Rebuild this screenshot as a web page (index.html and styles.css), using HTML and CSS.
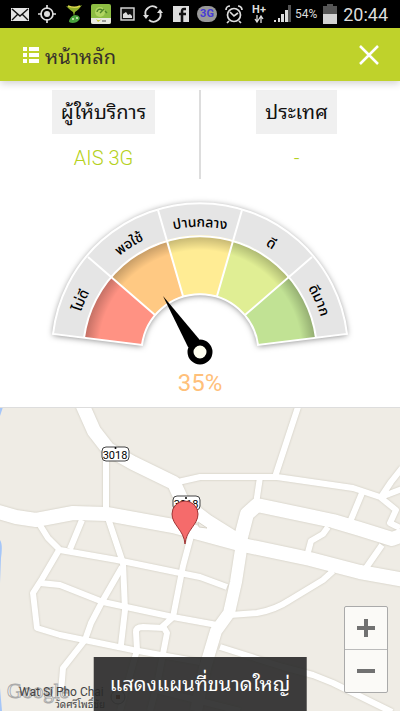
FILE: index.html
```html
<!DOCTYPE html>
<html lang="th">
<head>
<meta charset="UTF-8">
<meta name="viewport" content="width=device-width, initial-scale=1.0">
<title>หน้าหลัก</title>
<link rel="stylesheet" href="styles.css">
</head>
<body>

<!-- Status bar -->
<div class="status-bar">
    <div class="status-icons">
        <svg width="20" height="20" viewBox="0 0 20 20"><rect x="1" y="4" width="18" height="13" fill="#e4e4e4"/><path d="M2 5l8 7 8-7M2 16l6-6M18 16l-6-6" fill="none" stroke="#111" stroke-width="1.4"/></svg>
        <svg width="20" height="20" viewBox="0 0 20 20"><g fill="none" stroke="#ddd" stroke-width="1.7"><circle cx="10" cy="10" r="6"/><path d="M10 1v4M10 15v4M1 10h4M15 10h4"/></g><circle cx="10" cy="10" r="3" fill="#ddd"/></svg>
        <svg width="20" height="20" viewBox="0 0 20 20"><path d="M2 2c5 2 10 2 16-1-2 3-4 5-7 7l-1 4-1-4C6 6 4 4 2 2z" fill="#8fae2b"/><path d="M4 2c5 2 8 2 12 0" fill="none" stroke="#ddd94c" stroke-width="1.5"/><path d="M11 11c4 0 6 3 4 5-2 3-7 4-10 2 0-3 3-7 6-7z" fill="#48a23c"/><path d="M8 15h2M12 14h2" stroke="#d8efc4" stroke-width="1.5"/></svg>
        <svg width="20" height="20" viewBox="0 0 20 20"><rect width="20" height="20" rx="2" fill="#8dbd43"/><path d="M0 14h20v4a2 2 0 0 1-2 2H2a2 2 0 0 1-2-2z" fill="#e8e8df"/><circle cx="9" cy="8" r="5" fill="#b2d562"/><path d="M6 8a3 3 0 0 1 5-2M9 9l4-4M14 7l2 2" fill="none" stroke="#4f8428" stroke-width="1.4"/><path d="M5 15c3 2 4 1 6 0l-4 3z" fill="#c0c52a"/><path d="M11 17h4" stroke="#777" stroke-width="1.4"/></svg>
        <svg width="18" height="20" viewBox="0 0 18 20"><rect x="3" y="4" width="13" height="12" fill="#111" stroke="#ddd" stroke-width="1.4"/><path d="M5 14v-4l3-2 2 3 2-1 2 2v2z" fill="#ddd"/></svg>
        <svg width="20" height="20" viewBox="0 0 20 20"><path d="M3 12A7 7 0 0 1 14 4M17 8A7 7 0 0 1 6 16" fill="none" stroke="#ddd" stroke-width="1.800"/><path d="M0 11h6l-3 4zM14 9h6l-3-4z" fill="#ddd"/></svg>
        <svg width="20" height="20" viewBox="0 0 20 20"><rect x="3" y="2" width="16" height="16" fill="#ddd"/><path d="M16 5h-2c-2 0-2 1-2 3v10M9 10h7" fill="none" stroke="#111" stroke-width="2.600"/></svg>
        <span class="badge-3g">3G</span>
        <svg width="20" height="20" viewBox="0 0 20 20"><g fill="none" stroke="#ddd" stroke-width="1.700"><circle cx="10" cy="11" r="6.500"/><path d="M6 8l4 4 4-3M5 17l-2 2M15 17l2 2M2 6a4 4 0 0 1 4-4M18 6a4 4 0 0 0-4-4"/></g></svg>
        <span class="network">H+
            <svg width="10" height="8" viewBox="0 0 10 8"><path d="M3 0v6M1 4l2 3 2-3M7 8V2M5 4l2-3 2 3" fill="none" stroke="#ddd" stroke-width="1.300"/></svg>
        </span>
        <svg width="17" height="20" viewBox="0 0 17 20"><path d="M0 18v-2h2v2zM4 18v-4h2v4zM7 18V10h3v8zM11 18V6h3v12z" fill="#ddd"/><path d="M14 18V1h3v17z" fill="#555"/></svg>
    </div>
    <div class="status-right">
        <span class="battery-text">54%</span>
        <svg width="14" height="20" viewBox="0 0 14 20"><path d="M4 0h6v2h4v8H0V2h4z" fill="#555"/><path d="M0 10h14v10H0z" fill="#d2d2d2"/></svg>
        <span class="clock">20:44</span>
    </div>
</div>

<header class="header">
    <button class="menu-button" type="button">
        <svg width="16" height="16" viewBox="0 0 16 16"><path d="M0 0h4v4H0zM6 0h10v4H6zM0 6h4v4H0zM6 6h10v4H6zM0 12h4v4H0zM6 12h10v4H6z" fill="#fff"/></svg>
        หน้าหลัก
    </button>
    <button class="close-button" type="button" aria-label="ปิด">
        <svg width="20" height="20" viewBox="0 0 20 20"><path d="M1 1l18 18M19 1L1 19" stroke="#fff" stroke-width="2.500"/></svg>
    </button>
</header>

<main class="content">
    <section class="info">
        <div class="info-item">
            <h2 class="info-label">ผู้ให้บริการ</h2>
            <p class="info-value">AIS 3G</p>
        </div>
        <div class="info-item">
            <h2 class="info-label">ประเทศ</h2>
            <p class="info-value">-</p>
        </div>
    </section>

    <!-- Signal gauge -->
    <section class="gauge">
        <svg class="gauge-dial" width="320" height="176" viewBox="-160 -160 320 176">
            <defs>
                <path id="label-arc" d="M-125 -15A126 126 0 0 1 125 -15"/>
                <radialGradient id="rim" gradientUnits="userSpaceOnUse" cx="0" cy="0" r="117">
                    <stop offset="0.870" stop-color="#000" stop-opacity="0"/>
                    <stop offset="1" stop-color="#000" stop-opacity="0.250"/>
                </radialGradient>
            </defs>
            <path class="gauge-band" d="M-147 -18A148 148 0 0 1 147 -18L58 -7A58.500 58.500 0 0 0 -58 -7Z"/>
            <g class="gauge-slices">
                <path fill="#ff9283" d="M-116 -14A117 117 0 0 1 -89 -75L-45 -37A58.500 58.500 0 0 0 -58 -7Z"/>
                <path fill="#ffc983" d="M-89 -75A117 117 0 0 1 -33 -112L-17 -56A58.500 58.500 0 0 0 -45 -37Z"/>
                <path fill="#ffec94" d="M-33 -112A117 117 0 0 1 33 -112L17 -56A58.500 58.500 0 0 0 -17 -56Z"/>
                <path fill="#e0ee94" d="M33 -112A117 117 0 0 1 89 -75L45 -37A58.500 58.500 0 0 0 17 -56Z"/>
                <path fill="#c1e294" d="M89 -75A117 117 0 0 1 116 -14L58 -7A58.500 58.500 0 0 0 45 -37Z"/>
            </g>
            <path fill="url(#rim)" d="M-116 -14A117 117 0 0 1 116 -14L58 -7A58.500 58.500 0 0 0 -58 -7Z"/>
            <path class="gauge-lines" d="M-112 -95L-45 -37M-42 -142L-17 -56M42 -142L17 -56M112 -95L45 -37"/>
            <path class="gauge-lines" d="M-116 -14A117 117 0 0 1 116 -14M-147 -18A148 148 0 0 1 147 -18L58 -7A58.500 58.500 0 0 0 -58 -7Z"/>
            <g class="gauge-labels">
                <text><textPath href="#label-arc" startOffset="10%">ไม่ดี</textPath></text>
                <text><textPath href="#label-arc" startOffset="30%">พอใช้</textPath></text>
                <text><textPath href="#label-arc" startOffset="50%">ปานกลาง</textPath></text>
                <text><textPath href="#label-arc" startOffset="70%">ดี</textPath></text>
                <text><textPath href="#label-arc" startOffset="90%">ดีมาก</textPath></text>
            </g>
            <path d="M-37 -56L-12 -5 0 0 -1 -13Z"/>
            <circle r="9.500" fill="#fffff0" stroke="#000" stroke-width="6"/>
        </svg>
        <p class="gauge-value">35%</p>
    </section>

    <section class="map">
        <svg class="map-canvas" viewBox="0 408 400 303" preserveAspectRatio="xMinYMin slice">
            <path fill="#a5c6f8" d="M0 407h3l-3 9zM0 540q3 4 1 18l-1 25zM0 688l2 23H0z"/>
            <g class="roads">
                <g class="minor">
                    <path d="M178 482L200 477H277L353 488 380 497 396 510 390 523 400 528"/>
                    <path d="M298 407L275 477M260 477L256 504M362 493L350 522"/>
                    <path d="M402 468L391 482 381 497 402 489"/>
                    <path d="M328 527L323 534 311 541 307 556M382 545L366 568"/>
                    <path d="M106 460V514M82 520L70 549"/>
                    <path d="M38 522L48 538 60 550 117 560 180 573 200 577 227 587"/>
                    <path d="M108 518L123 563 125 610 121 645"/>
                    <path d="M59 550L42 579 33 593 37 628 60 635 133 650 200 662"/>
                    <path d="M40 583L60 585 103 602 173 617 217 625"/>
                    <path d="M122 567L103 600 91 623 85 640 63 668 61 692"/>
                    <path d="M191 536L183 566 173 617 162 627"/>
                    <path d="M120 711L137 650 136 632Q136 627 143 627L164 628 167 633 158 680 150 711"/>
                    <path d="M230 615L257 613Q275 610 290 600L323 580 333 571"/>
                    <path d="M220 647L283 667 313 675 333 683 392 712M125 682L240 711"/>
                </g>
                <path class="major" d="M82 404L94 431 108 449 133 463 174 483 183 503 208 522 240 542"/>
                <path class="major" d="M-5 511L16 517 36 520 73 513 107 514 173 526 243 545 310 559 333 565 360 572 405 580"/>
                <path class="major" d="M240 541L247 514 257 505 333 521 360 529 392 539 403 535"/>
                <path class="medium" d="M242 543L236 582 229 613 216 631 205 668 196 711"/>
            </g>
            <path d="M198 522l9 6-8-1z" fill="#efece5" stroke="#d9d5ca"/>
            <g class="shield">
                <rect x="102" y="447" width="27" height="14" rx="4"/>
                <circle cx="115.500" cy="448" r="1"/>
                <text x="115" y="459">3018</text>
                <rect x="173" y="496" width="27" height="14" rx="4"/>
                <circle cx="186" cy="498" r="1"/>
                <text x="186" y="508">3018</text>
            </g>
            <path d="M185 544C184 530 172 525 172 514A13 13 0 0 1 198 514C198 525 186 530 185 544Z" fill="#f56b6b" stroke="#a03535"/>
            <text class="google" x="7" y="698">Google</text>
            <text class="place" x="19" y="696">Wat Si Pho Chai</text>
            <text class="place-th" x="55" y="708">วัดศรีโพธิ์ชัย</text>
            <circle cx="118" cy="697" r="7" fill="#eee" stroke="#999"/>
            <rect x="116" y="695" width="4" height="4" fill="#8a4a20"/>
        </svg>
        <div class="zoom-control">
            <button type="button" aria-label="ซูมเข้า"><svg width="18" height="18" viewBox="0 0 18 18"><path d="M0 9h18M9 0v18" stroke="#717171" stroke-width="4"/></svg></button>
            <button type="button" aria-label="ซูมออก"><svg width="18" height="18" viewBox="0 0 18 18"><path d="M0 9h18" stroke="#717171" stroke-width="4"/></svg></button>
        </div>
        <button class="map-button" type="button">แสดงแผนที่ขนาดใหญ่</button>
    </section>
</main>

</body>
</html>
```

FILE: styles.css
```css
* {
    box-sizing: border-box;
}
body {
    font-family: Roboto, "Noto Sans Thai Looped", "Noto Sans", "Noto Sans Thai", sans-serif;
    background-color: #fff;
    margin: 0;
    min-height: 100vh;
    display: flex;
    flex-direction: column;
}
button {
    font-family: inherit;
    border: none;
    background: none;
    padding: 0;
    cursor: pointer;
}
svg {
    display: block;
    flex: none;
}
h2, p {
    margin: 0;
    font-weight: 400;
}

/* status bar */
.status-bar {
    display: flex;
    justify-content: space-between;
    align-items: center;
    height: 28px;
    padding: 0 12px 0 10px;
    background-color: #000;
    color: #ddd;
}
.status-icons {
    display: flex;
    align-items: center;
    gap: 7px;
}
.status-right {
    display: flex;
    align-items: center;
    gap: 6px;
}
.badge-3g {
    width: 20px;
    height: 16px;
    border-radius: 8px;
    background-color: #999;
    color: #4539d6;
    font-size: 11px;
    font-weight: 700;
    line-height: 16px;
    text-align: center;
}
.network {
    display: flex;
    flex-direction: column;
    align-items: center;
    width: 16px;
    font-size: 11px;
    font-weight: 700;
    line-height: 10px;
}
.battery-text {
    font-size: 12px;
}
.clock {
    font-size: 18px;
}

/* header */
.header {
    display: flex;
    justify-content: space-between;
    align-items: center;
    height: 53px;
    padding: 0 21px 0 23px;
    background-color: #bfd22b;
    position: relative;
    box-shadow: 0 2px 8px rgba(0, 0, 0, 0.2);
}
.menu-button {
    display: flex;
    align-items: center;
    gap: 6px;
    font-size: 20px;
    color: #36302c;
}

.content {
    flex: 1;
    display: flex;
    flex-direction: column;
}
.info {
    display: flex;
    padding: 9px 8px 0;
}
.info-item {
    flex: 1;
    height: 89px;
    text-align: center;
}
.info-item + .info-item {
    border-left: 2px solid #ddd;
}
.info-label {
    display: inline-block;
    padding: 0 9px;
    background-color: #f0f0f0;
    color: #111;
    font-size: 20px;
    line-height: 44px;
}
.info-value {
    margin-top: 12px;
    color: #b5d120;
    font-size: 20px;
    font-weight: 300;
    line-height: 24px;
}

/* gauge */
.gauge {
    display: flex;
    flex-direction: column;
    align-items: center;
    padding: 13px 0 9px;
}
.gauge-band {
    fill: #e5e5e5;
    filter: drop-shadow(0 1px 3px rgba(0, 0, 0, 0.5));
}
.gauge-lines {
    fill: none;
    stroke: #fff;
    stroke-width: 2px;
}
.gauge-labels {
    font-family: "Noto Sans Thai", "Noto Sans", sans-serif;
    font-size: 14px;
    font-weight: 500;
    text-anchor: middle;
}
.gauge-value {
    color: #ffc07a;
    font-size: 24px;
    line-height: 30px;
}

/* map */
.map {
    flex: 1;
    min-height: 304px;
    position: relative;
    overflow: hidden;
    background-color: #efece5;
    border-top: 1px solid #ddd;
}
.map-canvas {
    position: absolute;
    top: 0;
    left: 0;
    width: 100%;
    height: 100%;
}
.roads {
    fill: none;
    stroke: #fff;
    stroke-linejoin: round;
    filter: drop-shadow(0 0 1px #c9c5b8);
}
.minor {
    stroke-width: 6px;
}
.medium {
    stroke-width: 12px;
}
.major {
    stroke-width: 14px;
}
.shield rect {
    fill: #fff;
    stroke: #444;
}
.shield text {
    font-size: 11px;
    text-anchor: middle;
}
.google {
    font-family: "Liberation Serif", serif;
    font-size: 21px;
    fill: #fff;
    stroke: #aaa;
}
.place {
    font-size: 12px;
    fill: #444;
}
.place-th {
    font-size: 10px;
    fill: #444;
}
.zoom-control {
    position: absolute;
    right: 12px;
    bottom: 18px;
    width: 44px;
    border: 1px solid #aaa;
    border-radius: 2px;
    background-color: #fbfaf7;
}
.zoom-control button {
    display: flex;
    align-items: center;
    justify-content: center;
    width: 100%;
    height: 42px;
}
.zoom-control button + button {
    height: 43px;
    border-top: 1px solid #bbb;
}
.map-button {
    position: absolute;
    left: 50%;
    bottom: 0;
    transform: translateX(-50%);
    padding: 0 16px;
    background-color: rgba(40, 40, 40, 0.9);
    color: #fff;
    font-size: 20px;
    line-height: 54px;
    white-space: nowrap;
}
```
